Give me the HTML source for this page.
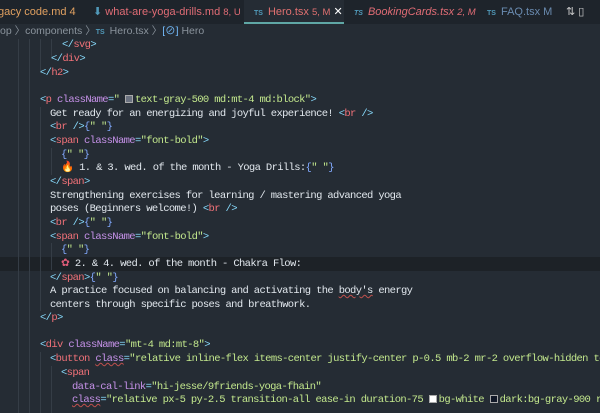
<!DOCTYPE html>
<html><head><meta charset="utf-8"><style>
*{margin:0;padding:0;box-sizing:border-box}
body{width:600px;height:413px;overflow:hidden;background:#252c34;font-family:"Liberation Mono",monospace;position:relative}
.tabs{position:absolute;top:0;left:0;width:600px;height:24px;background:#1e242b;font-family:"Liberation Sans",sans-serif;font-size:11px;white-space:nowrap}
.tab{position:absolute;top:0;height:24px;line-height:24px}
.ts{color:#519aba;font-size:7px;font-weight:bold;margin-right:5px}
.crumb{position:absolute;top:24px;left:0;height:15px;line-height:14px;font-family:"Liberation Sans",sans-serif;font-size:10.5px;color:#8a939c;white-space:nowrap}
.l{position:absolute;left:0;height:14px;line-height:14px;font-size:10.5px;letter-spacing:-0.64px;white-space:pre;color:#e2e8ee}
.hl{position:absolute;left:0;width:600px;height:14px;background:#1d2227}
.g{position:absolute;width:1px;background:#353d46}
.t{color:#f07178}.b{color:#89ddff}.a{color:#c792ea}.s{color:#c3e88d}.c{color:#82aaff}.sq{display:inline-block;width:8px;height:8px;border:1px solid #aaa;vertical-align:-1px;margin-right:2px}
.u{text-decoration:underline wavy #c0504d;text-decoration-thickness:1px}
</style></head><body>
<div class="tabs">
<div class="tab" style="left:-2px;color:#e0a060">gacy code.md 4</div>
<div class="tab" style="left:93px;color:#e06c75"><span style="color:#519aba">⬇</span> what-are-yoga-drills.md <span style="font-size:9.5px">8, U</span></div>
<div class="tab" style="left:244px;width:100px;background:#252c34;color:#e07070;padding-left:10px;border-bottom:2px solid #5fa7a5"><span class="ts">TS</span>Hero.tsx <span style="font-size:9.5px">5, M</span> <span style="color:#fff">✕</span></div>
<div class="tab" style="left:354px;color:#e06c75;font-style:italic"><span class="ts">TS</span>BookingCards.tsx <span style="font-size:9.5px">2, M</span></div>
<div class="tab" style="left:487px;color:#6a8bb0"><span class="ts">TS</span>FAQ.tsx M</div>
<div class="tab" style="left:566px;color:#ccc">⇅ ▯</div>
</div>
<div class="crumb">op 〉components 〉<span class="ts">TS</span>Hero.tsx 〉<span style="color:#75beff">[⊘]</span> Hero</div>
<div class="hl" style="top:257px"></div>
<div class="g" style="left:18px;top:39px;height:374px"></div>
<div class="g" style="left:29px;top:39px;height:374px"></div>
<div class="g" style="left:40px;top:39px;height:34px"></div>
<div class="g" style="left:51px;top:39px;height:20px"></div>
<div class="g" style="left:40px;top:107px;height:204px"></div>
<div class="g" style="left:51px;top:148px;height:27px"></div>
<div class="g" style="left:51px;top:243px;height:27px"></div>
<div class="g" style="left:40px;top:352px;height:61px"></div>
<div class="g" style="left:51px;top:366px;height:47px"></div>
<div class="l" style="top:38px;left:62px"><span class="b">&lt;/</span><span class="t">svg</span><span class="b">&gt;</span></div>
<div class="l" style="top:52px;left:51px"><span class="b">&lt;/</span><span class="t">div</span><span class="b">&gt;</span></div>
<div class="l" style="top:66px;left:40px"><span class="b">&lt;/</span><span class="t">h2</span><span class="b">&gt;</span></div>
<div class="l" style="top:93px;left:40px"><span class="b">&lt;</span><span class="t">p</span> <span class="a">className</span><span class="b">=</span><span class="s">" <span class="sq" style="background:#6b7280"></span>text-gray-500 md:mt-4 md:block"</span><span class="b">&gt;</span></div>
<div class="l" style="top:107px;left:50px">Get ready for an energizing and joyful experience! <span class="b">&lt;</span><span class="t">br</span> <span class="b">/&gt;</span></div>
<div class="l" style="top:120px;left:50px"><span class="b">&lt;</span><span class="t">br</span> <span class="b">/&gt;</span><span class="c">{</span><span class="s">" "</span><span class="c">}</span></div>
<div class="l" style="top:134px;left:50px"><span class="b">&lt;</span><span class="t">span</span> <span class="a">className</span><span class="b">=</span><span class="s">"font-bold"</span><span class="b">&gt;</span></div>
<div class="l" style="top:148px;left:61px"><span class="c">{</span><span class="s">" "</span><span class="c">}</span></div>
<div class="l" style="top:161px;left:61px">🔥 1. &amp; 3. wed. of the month - Yoga Drills:<span class="c">{</span><span class="s">" "</span><span class="c">}</span></div>
<div class="l" style="top:175px;left:50px"><span class="b">&lt;/</span><span class="t">span</span><span class="b">&gt;</span></div>
<div class="l" style="top:189px;left:50px">Strengthening exercises for learning / mastering advanced yoga</div>
<div class="l" style="top:202px;left:50px">poses (Beginners welcome!) <span class="b">&lt;</span><span class="t">br</span> <span class="b">/&gt;</span></div>
<div class="l" style="top:216px;left:50px"><span class="b">&lt;</span><span class="t">br</span> <span class="b">/&gt;</span><span class="c">{</span><span class="s">" "</span><span class="c">}</span></div>
<div class="l" style="top:230px;left:50px"><span class="b">&lt;</span><span class="t">span</span> <span class="a">className</span><span class="b">=</span><span class="s">"font-bold"</span><span class="b">&gt;</span></div>
<div class="l" style="top:243px;left:61px"><span class="c">{</span><span class="s">" "</span><span class="c">}</span></div>
<div class="l" style="top:257px;left:61px"><span style="color:#e25d7a">✿</span> 2. &amp; 4. wed. of the month - Chakra Flow:</div>
<div class="l" style="top:271px;left:50px"><span class="b">&lt;/</span><span class="t">span</span><span class="b">&gt;</span><span class="c">{</span><span class="s">" "</span><span class="c">}</span></div>
<div class="l" style="top:284px;left:50px">A practice focused on balancing and activating the <span class="u">body's</span> energy</div>
<div class="l" style="top:298px;left:50px">centers through specific poses and breathwork.</div>
<div class="l" style="top:311px;left:40px"><span class="b">&lt;/</span><span class="t">p</span><span class="b">&gt;</span></div>
<div class="l" style="top:338px;left:40px"><span class="b">&lt;</span><span class="t">div</span> <span class="a">className</span><span class="b">=</span><span class="s">"mt-4 md:mt-8"</span><span class="b">&gt;</span></div>
<div class="l" style="top:352px;left:50px"><span class="b">&lt;</span><span class="t">button</span> <span class="a u">class</span><span class="b">=</span><span class="s">"relative inline-flex items-center justify-center p-0.5 mb-2 mr-2 overflow-hidden text</span></div>
<div class="l" style="top:366px;left:61px"><span class="b">&lt;</span><span class="t">span</span></div>
<div class="l" style="top:380px;left:72px"><span class="a">data-cal-link</span><span class="b">=</span><span class="s">"hi-jesse/9friends-yoga-fhain"</span></div>
<div class="l" style="top:393px;left:72px"><span class="a u">class</span><span class="b">=</span><span class="s">"relative px-5 py-2.5 transition-all ease-in duration-75 <span class="sq" style="background:#fff"></span>bg-white <span class="sq" style="background:#111827"></span>dark:bg-gray-900 ro</span></div>
</body></html>
